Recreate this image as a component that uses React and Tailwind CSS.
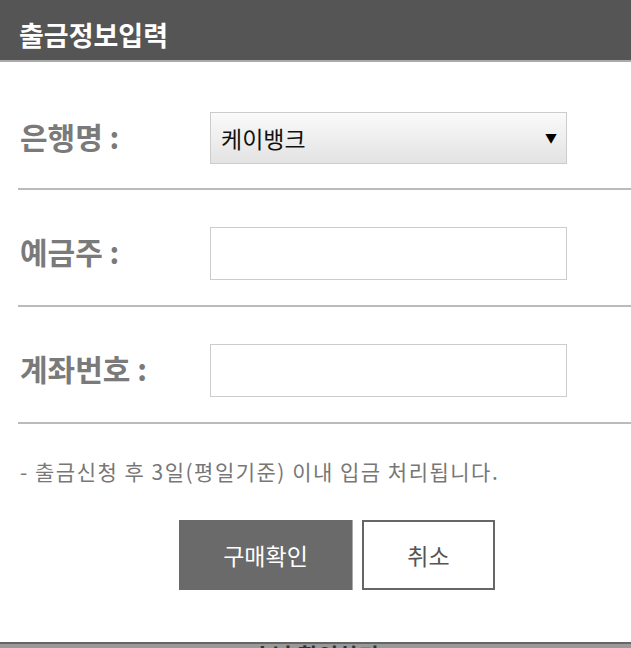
export default function App() {
  const font = { fontFamily: '"Noto Sans CJK KR", "Noto Sans", sans-serif' };
  return (
    <div className="w-[631px] h-[648px] bg-white overflow-hidden flex flex-col" style={font}>
      <div className="h-[62px] shrink-0 bg-[#555555] border-b-2 border-[#aaaaaa] flex items-center pl-[19px] pt-[8px]">
        <span className="text-white text-[27px] font-bold leading-none">출금정보입력</span>
      </div>
      <div className="ml-[18px] flex flex-col">
        <div className="flex items-center pt-[50px] pb-[24px] border-b-2 border-[#bbbbbb]">
          <div className="w-[192px] pl-[2px] pb-[5px] text-[30px] font-bold text-[#7a7a7a] leading-none">은행명 :</div>
          <div className="w-[357px] h-[52px] border border-[#cccccc] bg-gradient-to-b from-[#fafafa] to-[#e3e3e3] flex items-center justify-between pl-[10px] pr-[9px]">
            <span className="text-[23px] text-[#111111] leading-none">케이뱅크</span>
            <span className="text-[12px] text-black leading-none">▼</span>
          </div>
        </div>
        <div className="flex items-center pt-[37px] pb-[25px] border-b-2 border-[#bbbbbb]">
          <div className="w-[192px] pl-[2px] pb-[5px] text-[30px] font-bold text-[#7a7a7a] leading-none">예금주 :</div>
          <div className="w-[357px] h-[53px] border border-[#cccccc] bg-white"></div>
        </div>
        <div className="flex items-center pt-[37px] pb-[25px] border-b-2 border-[#bbbbbb]">
          <div className="w-[192px] pl-[2px] pb-[5px] text-[30px] font-bold text-[#7a7a7a] leading-none">계좌번호 :</div>
          <div className="w-[357px] h-[53px] border border-[#cccccc] bg-white"></div>
        </div>
        <div className="pt-[37px] pl-[2px] text-[21px] tracking-[1.5px] text-[#777777] leading-none">
          - 출금신청 후 3일(평일기준) 이내 입금 처리됩니다.
        </div>
      </div>
      <div className="flex gap-[9px] mt-[38px] pl-[179px]">
        <div className="w-[174px] h-[70px] bg-[#6a6a6a] border-r border-[#aaaaaa] flex items-center justify-center text-white text-[23px]">구매확인</div>
        <div className="w-[133px] h-[70px] bg-white border-2 border-[#666666] flex items-center justify-center text-[#555555] text-[23px]">취소</div>
      </div>
      <div className="mt-auto h-[6px] shrink-0 bg-[#999999] border-t-2 border-[#666666] overflow-hidden flex justify-center">
        <span className="text-[22px] font-bold text-[#333333] leading-none -mt-[1px]">수납 확인하기</span>
      </div>
    </div>
  );
}
